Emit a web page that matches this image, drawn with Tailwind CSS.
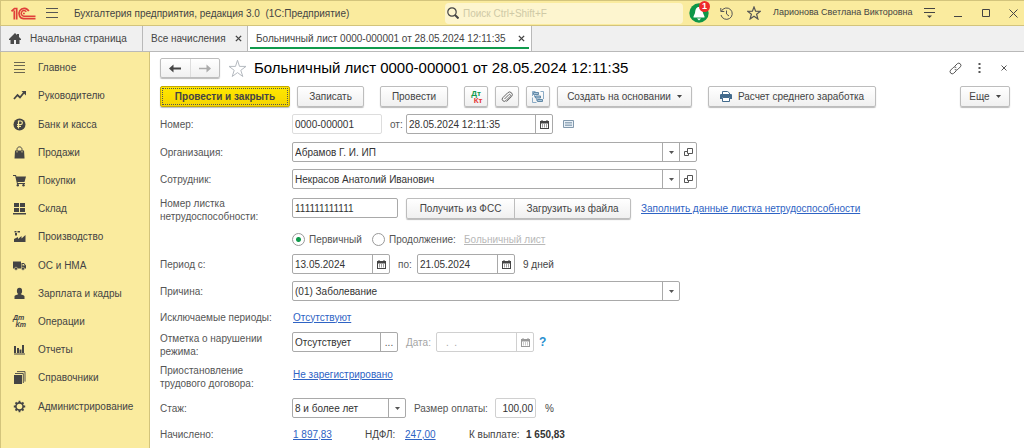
<!DOCTYPE html>
<html lang="ru">
<head>
<meta charset="utf-8">
<meta name="viewport" content="width=device-width, initial-scale=1">
<title>Больничный лист — Бухгалтерия предприятия</title>
<script src="https://cdn.jsdelivr.net/npm/@tailwindcss/browser@4"></script>
</head>
<body class="flex min-h-screen flex-col bg-white font-['Liberation_Sans',Arial,sans-serif] text-[10px] text-[#444]">

<svg class="hidden" aria-hidden="true">
  <symbol id="cal" viewBox="0 0 9 9"><path fill="currentColor" fill-rule="evenodd" d="M0 1h1.500V0h1v1h4V0h1v1H9v8H0zM1 3.500V8h7V3.500zM2 4.500h1v1H2zM4 4.500h1v1H4zM6 4.500h1v1H6zM2 6.500h1v.7H2zM4 6.500h1v.7H4zM6 6.500h1v.7H6z"/></symbol>
  <symbol id="down" viewBox="0 0 5 3"><path fill="currentColor" d="M0 0h5L2.500 3z"/></symbol>
  <symbol id="open" viewBox="0 0 9 9"><path fill="none" stroke="currentColor" d="M3.500.5h5v5h-5zM3.500 3.500h-3v4h4v-2"/></symbol>
  <symbol id="cross" viewBox="0 0 8 8"><path fill="none" stroke="currentColor" stroke-width="1.600" d="M1 1l6 6M7 1L1 7"/></symbol>
</svg>

<header class="flex h-[26px] shrink-0 items-center border-y border-l border-[#d3c47c] bg-[#faeb9e]">
  <svg class="ml-[10px] h-[13px] w-[25px] shrink-0" viewBox="0 0 25 13" fill="none" stroke="#e0403a" role="img" aria-label="1С">
    <path stroke-width="1.700" d="M.5 4.300L3.500 1.500h2.200V12.500M3.300 3.500v9"/>
    <path stroke-width="1.700" d="M17.800 4.200A5.200 5.200 0 1 0 12.800 11.700H24.500"/>
    <path stroke-width="1.500" d="M15.300 4.800A2.800 2.800 0 1 0 12.800 9.200H24.500"/>
    <path stroke-width="1.300" d="M13.800 6.500h-1.800"/>
  </svg>
  <button class="ml-[10px] flex h-4 w-3 shrink-0 items-center" aria-label="Главное меню"><svg class="h-[10px] w-3" viewBox="0 0 12 10" stroke="#555"><path d="M0 .5h12M0 4.500h12M0 9.500h12"/></svg></button>
  <span class="ml-4 w-[371px] whitespace-nowrap">Бухгалтерия предприятия, редакция 3.0&nbsp; (1С:Предприятие)</span>
  <label class="flex h-[21px] min-w-0 flex-1 items-center rounded-sm bg-[#fdf5cf] pl-[2px]">
    <svg class="size-3 shrink-0" viewBox="0 0 12 12" fill="none" stroke="#444" stroke-width="1.200"><circle cx="5" cy="5" r="4.200"/><path stroke-width="2" d="M8 8l3.500 3.500"/></svg>
    <input class="ml-1 min-w-0 flex-1 bg-transparent outline-none placeholder:text-[#cfc9a6]" placeholder="Поиск Ctrl+Shift+F" aria-label="Поиск">
  </label>
  <button class="relative ml-[6px] size-5 shrink-0" aria-label="Уведомления">
    <svg class="size-5" viewBox="0 0 20 20"><circle cx="10" cy="10" r="9.700" fill="#0e9648"/><path fill="#fff" d="M10 4c3 0 3.500 2.500 4 6l1.500 3.500v1h-11v-1L6 10c.5-3.500 1-6 4-6zM8 15.500h4l-2 2z"/></svg>
    <span class="absolute -top-[2px] left-[10px] flex size-[11px] items-center justify-center rounded-full bg-[#ee2a2a] text-[9px] font-bold text-white">1</span>
  </button>
  <button class="ml-[11px] size-[13px] shrink-0" aria-label="История"><svg viewBox="0 0 13 13" fill="none" stroke="#555"><path d="M1.500 4A5.700 5.700 0 1 1 1 8M.8 1v3.500h3.500M6.500 3.500v3.500L9 9"/></svg></button>
  <button class="ml-[14px] size-[14px] shrink-0" aria-label="Избранное"><svg viewBox="0 0 14 14" fill="none" stroke="#555" stroke-width="1.200"><path d="M7 1l1.600 4.200 4.600.2-3.600 2.800L10.900 13 7 10.300 3.100 13l1.300-4.800L.8 5.400l4.600-.2z"/></svg></button>
  <span class="ml-3 w-[140px] text-[9px] whitespace-nowrap">Ларионова Светлана Викторовна</span>
  <button class="ml-[11px] h-3 w-[11px] shrink-0" aria-label="Настройки"><svg viewBox="0 0 11 12" fill="none" stroke="#444"><path d="M0 1.500h11M0 5.500h11"/><path fill="#444" stroke="none" d="M3 8.500h5L5.500 11z"/></svg></button>
  <button class="ml-[19px] size-2 shrink-0" aria-label="Свернуть"><svg viewBox="0 0 8 8" stroke="#444"><path d="M0 7.500h8"/></svg></button>
  <button class="ml-5 size-2 shrink-0" aria-label="Развернуть"><svg viewBox="0 0 8 8" fill="none" stroke="#444"><path d="M.5.5h7v7h-7z"/></svg></button>
  <button class="mr-[6px] ml-[19px] size-[9px] shrink-0" aria-label="Закрыть"><svg viewBox="0 0 9 9" stroke="#444"><path d="M.5.5l8 8M8.500.5l-8 8"/></svg></button>
</header>

<nav class="flex h-[26px] shrink-0 border-b border-l border-[#b9b9b9] bg-[#f0f0f0]" aria-label="Открытые окна">
  <a href="#" class="flex w-[142px] items-center border-r border-[#b9b9b9] pl-2 whitespace-nowrap"><svg class="h-[11px] w-3 shrink-0" viewBox="0 0 12 11" fill="#4a4a4a"><path d="M6 0l2 2V1h2v3l2 2v1h-1.500v4H7V7H5v4H1.500V7H0V6z"/></svg><span class="ml-[9px]">Начальная страница</span></a>
  <div class="flex w-[105px] items-center justify-between border-r border-[#b9b9b9] pr-[5px] pl-2"><a href="#" class="whitespace-nowrap">Все начисления</a><button class="shrink-0" aria-label="Закрыть вкладку"><svg class="size-[7px]"><use href="#cross"/></svg></button></div>
  <div class="flex w-[284px] items-stretch border-r border-[#b9b9b9] bg-white px-[2px] pb-[2px]"><div class="flex flex-1 items-center justify-between border-b-2 border-[#109a4c] pt-[3px] pr-1 pl-[6px]"><a href="#" class="whitespace-nowrap">Больничный лист 0000-000001 от 28.05.2024 12:11:35</a><button class="shrink-0" aria-label="Закрыть вкладку"><svg class="size-[7px]"><use href="#cross"/></svg></button></div></div>
</nav>

<div class="flex flex-1">
  <aside class="w-[150px] shrink-0 border-x border-[#d3c47c] bg-[#faeb9e]">
    <nav class="flex flex-col pt-px whitespace-nowrap text-[#444]" aria-label="Разделы">
      <a href="#" class="flex h-7 items-center gap-3 pl-3"><svg class="size-[13px] shrink-0" viewBox="0 0 13 13" stroke="#6b6650"><path d="M1 1.500h11M1 4.500h11M1 8.500h11M1 11.500h11"/></svg>Главное</a>
      <a href="#" class="flex h-[29px] items-center gap-3 pl-3"><svg class="size-[13px] shrink-0" viewBox="0 0 13 13"><path fill="none" stroke="currentColor" stroke-width="1.800" d="M1 10l3.500-4L7 8.500l4-5"/><path fill="currentColor" d="M8.500 2H13v4.500z"/></svg>Руководителю</a>
      <a href="#" class="flex h-7 items-center gap-3 pl-3"><svg class="size-[13px] shrink-0" viewBox="0 0 13 13"><circle cx="6.500" cy="6.500" r="6" fill="currentColor"/><path fill="none" stroke="#faeb9e" stroke-width="1.200" d="M5.500 10.500V3h2a1.800 1.800 0 0 1 0 3.700H4M4 8.500h4"/></svg>Банк и касса</a>
      <a href="#" class="flex h-7 items-center gap-3 pl-3"><svg class="size-[13px] shrink-0" viewBox="0 0 13 13"><path fill="currentColor" d="M2 4.500h9l.5 8h-10z"/><path fill="none" stroke="currentColor" d="M4 6V3.500C4 0 9 0 9 3.500V6"/><path fill="none" stroke="#faeb9e" stroke-width=".8" d="M4 5v1.500M9 5v1.500"/></svg>Продажи</a>
      <a href="#" class="flex h-7 items-center gap-3 pl-3"><svg class="size-[13px] shrink-0" viewBox="0 0 13 13" fill="currentColor"><path d="M0 1h3l.4 1.500H13L11.500 8h-7l.3 1H12v1H4L2.200 2H0z"/><circle cx="4.800" cy="11.300" r="1.200"/><circle cx="10.500" cy="11.300" r="1.200"/></svg>Покупки</a>
      <a href="#" class="flex h-7 items-center gap-3 pl-3"><svg class="size-[13px] shrink-0" viewBox="0 0 13 13" fill="currentColor"><path d="M1 1h5v4H1zM7 1h5v4H7zM1 6h5v4H1zM7 6h5v4H7zM0 11h13v1.500H0z"/></svg>Склад</a>
      <a href="#" class="flex h-[29px] items-center gap-3 pl-3"><svg class="size-[13px] shrink-0" viewBox="0 0 13 13" fill="currentColor"><path d="M1 12V9L5 7v2l3.500-3v2.500L12.500 5v7zM1.500 1h2v1.500h-2zM4.500 1H7v1.500H4.500zM2 3h2v2.500H2z"/></svg>Производство</a>
      <a href="#" class="flex h-7 items-center gap-3 pl-3"><svg class="size-[13px] shrink-0" viewBox="0 0 13 13"><path fill="currentColor" d="M0 2.500h8v7H0zM8.500 4h2.500l2 2.500v3H8.500z"/><path fill="#faeb9e" d="M9.500 5h1.300l1 1.500H9.500z"/><circle cx="3" cy="9.700" r="1.500" fill="currentColor" stroke="#faeb9e" stroke-width=".5"/><circle cx="10" cy="9.700" r="1.500" fill="currentColor" stroke="#faeb9e" stroke-width=".5"/></svg>ОС и НМА</a>
      <a href="#" class="flex h-7 items-center gap-3 pl-3"><svg class="size-[13px] shrink-0" viewBox="0 0 13 13" fill="currentColor"><ellipse cx="6.500" cy="4" rx="2.600" ry="3.300"/><path d="M1.500 12V9.500C1.500 8 5 8 5.300 7h2.400C8 8 11.500 8 11.500 9.500V12z"/></svg>Зарплата и кадры</a>
      <a href="#" class="flex h-7 items-center gap-3 pl-3"><span class="flex w-[13px] flex-col text-[7px]/[7px] font-bold italic" aria-hidden="true"><span>Дт</span><span class="self-end">Кт</span></span>Операции</a>
      <a href="#" class="flex h-7 items-center gap-3 pl-3"><svg class="size-[13px] shrink-0" viewBox="0 0 13 13" fill="currentColor"><path d="M1 3h2v7H1zM4 5h2v5H4zM6.500 6.500h2V10h-2zM9 2h2v8H9zM1 10.500h11v1H1z"/></svg>Отчеты</a>
      <a href="#" class="flex h-[29px] items-center gap-3 pl-3"><svg class="size-[13px] shrink-0" viewBox="0 0 13 13"><path fill="currentColor" d="M1 4h8v9H1z"/><path fill="none" stroke="currentColor" stroke-width=".9" d="M2 2.500h8.300V12M4 .6h8v10"/></svg>Справочники</a>
      <a href="#" class="flex h-7 items-center gap-3 pl-3"><svg class="size-[13px] shrink-0" viewBox="0 0 13 13" fill="none" stroke="currentColor"><circle cx="6.500" cy="6.500" r="3.600" stroke-width="1.600"/><path stroke-width="1.800" d="M6.500.8v2.200M6.500 10v2.200M.8 6.500H3M10 6.500h2.200M2.500 2.500L4 4M9 9l1.500 1.500M10.500 2.500L9 4M4 9l-1.500 1.500"/></svg>Администрирование</a>
    </nav>
  </aside>

  <main class="min-w-0 flex-1 pl-[10px]">
    <div class="flex h-8 items-center">
      <div class="flex h-5 w-[60px] rounded-[2px] border border-[#bdbdbd] bg-linear-to-b from-white to-[#f0f0f0] shadow-[0_1px_1px_#bbb]">
        <button class="flex flex-1 items-center justify-center border-r border-[#ddd]" aria-label="Назад"><svg class="h-[9px] w-3" viewBox="0 0 12 9"><path fill="#444" d="M0 4.500L4.500.5v3H12v2H4.500v3z"/></svg></button>
        <button class="flex flex-1 items-center justify-center" aria-label="Вперед"><svg class="h-[9px] w-3" viewBox="0 0 12 9"><path fill="#aaa" d="M12 4.500L7.500.5v3.200H0v1.600h7.500v3.200z"/></svg></button>
      </div>
      <button class="ml-2 size-[19px]" aria-label="В избранное"><svg viewBox="0 0 19 19" fill="none" stroke="#b5bac0"><path d="M9.500 1.200l2 6.200H18l-5.200 3.900 2 6.200-5.300-3.900-5.300 3.900 2-6.200L1 7.400h6.500z"/></svg></button>
      <h1 class="ml-[7px] text-[15px] whitespace-nowrap text-black">Больничный лист 0000-000001 от 28.05.2024 12:11:35</h1>
      <button class="ml-auto size-[13px]" aria-label="Ссылка"><svg viewBox="0 0 13 13" fill="none" stroke="#555"><path d="M5.500 4.500L8.300 1.700a2.200 2.200 0 0 1 3.100 3.100L8.800 7.400a2.200 2.200 0 0 1-3.100 0M7.500 8.500l-2.800 2.800a2.200 2.200 0 0 1-3.100-3.100l2.600-2.600a2.200 2.200 0 0 1 3.100 0"/></svg></button>
      <button class="ml-4 h-[10px] w-[3px]" aria-label="Меню"><svg viewBox="0 0 3 10" fill="#555"><path d="M.5 0h2v2h-2zM.5 4h2v2h-2zM.5 8h2v2h-2z"/></svg></button>
      <button class="mr-[17px] ml-5 size-[6px]" aria-label="Закрыть документ"><svg viewBox="0 0 6 6" stroke="#555"><path d="M.5.5l5 5M5.500.5l-5 5"/></svg></button>
    </div>

    <div class="mt-[2px] flex h-[21px] whitespace-nowrap">
      <button class="w-[130px] rounded-[2px] border border-[#c4a900] bg-linear-to-b from-[#ffe800] to-[#f5d400] p-px font-bold shadow-[0_1px_1px_#bbb]"><span class="flex h-full items-center justify-center border border-dotted border-[#555]">Провести и закрыть</span></button>
      <button class="ml-[7px] w-[67px] rounded-[2px] border border-[#bdbdbd] bg-linear-to-b from-white to-[#f0f0f0] shadow-[0_1px_1px_#bbb]">Записать</button>
      <button class="ml-4 w-[68px] rounded-[2px] border border-[#bdbdbd] bg-linear-to-b from-white to-[#f0f0f0] shadow-[0_1px_1px_#bbb]">Провести</button>
      <button class="ml-4 flex w-6 items-center justify-center rounded-[2px] border border-[#bdbdbd] bg-linear-to-b from-white to-[#f0f0f0] shadow-[0_1px_1px_#bbb]" aria-label="Проводки"><span class="flex w-[13px] flex-col text-[8px]/[7px] font-bold"><span class="text-[#109a4c]">Дт</span><span class="self-end text-[#e53935]">Кт</span></span></button>
      <button class="ml-[7px] flex w-6 items-center justify-center rounded-[2px] border border-[#bdbdbd] bg-linear-to-b from-white to-[#f0f0f0] shadow-[0_1px_1px_#bbb]" aria-label="Файлы"><svg class="size-3" viewBox="0 0 12 12" fill="none" stroke="#666"><path d="M3.500 8l4.300-4.300a1 1 0 0 1 1.500 1.500L4.800 9.700a2 2 0 0 1-3-3L6.700 1.800a2.600 2.600 0 0 1 3.800 3.800L5.500 10.600"/></svg></button>
      <button class="ml-[7px] flex w-6 items-center justify-center rounded-[2px] border border-[#bdbdbd] bg-linear-to-b from-white to-[#f0f0f0] shadow-[0_1px_1px_#bbb]" aria-label="Структура подчиненности"><svg class="size-3" viewBox="0 0 12 12"><path fill="#a9c4da" stroke="#55809f" stroke-width=".9" d="M1.500 1.500h5v2h-5zM3.500 5h5v2h-5zM5.500 8.500h5v2h-5z"/><path fill="none" stroke="#7fa3c0" stroke-width=".9" d="M.5 5V.5h3M8.500.5h3V8M.5 6.500v5h4M2.500 3.500V6h1M4.500 7v2.500h1"/></svg></button>
      <button class="ml-[7px] flex w-[135px] items-center justify-center gap-[6px] rounded-[2px] border border-[#bdbdbd] bg-linear-to-b from-white to-[#f0f0f0] shadow-[0_1px_1px_#bbb]">Создать на основании<svg class="h-[3px] w-[5px] shrink-0"><use href="#down"/></svg></button>
      <button class="ml-4 flex w-[168px] items-center justify-center gap-[6px] rounded-[2px] border border-[#bdbdbd] bg-linear-to-b from-white to-[#f0f0f0] shadow-[0_1px_1px_#bbb]"><svg class="h-[11px] w-3 shrink-0" viewBox="0 0 12 11"><path fill="#426a8c" d="M1 3h10q1 0 1 1v4h-2V6H2v2H0V4q0-1 1-1z"/><path fill="#fff" stroke="#426a8c" d="M2.500 3V.5h5l2 1.500v1M2.500 6.500h7v4h-7z"/></svg>Расчет среднего заработка</button>
      <button class="mr-[14px] ml-auto flex w-[50px] items-center justify-center gap-[6px] rounded-[2px] border border-[#bdbdbd] bg-linear-to-b from-white to-[#f0f0f0] shadow-[0_1px_1px_#bbb]">Еще<svg class="h-[3px] w-[5px] shrink-0"><use href="#down"/></svg></button>
    </div>

    <form class="pt-[7px] pb-1 text-[10px]/[13px] whitespace-nowrap text-[#555]">
      <div class="flex h-5 items-center">
        <label for="num" class="w-[132px]">Номер:</label>
        <input id="num" readonly value="0000-000001" class="h-5 w-[90px] rounded-[2px] border border-[#ddd] px-[2px] text-[#333]">
        <label for="dt" class="ml-2 w-4">от:</label>
        <div class="flex h-5 w-[147px] rounded-[2px] border border-[#a9a9a9]"><input id="dt" value="28.05.2024 12:11:35" class="min-w-0 flex-1 px-[2px] text-[#333] outline-none"><button type="button" class="flex w-[17px] items-center justify-center border-l border-[#a9a9a9] text-[#444]" aria-label="Календарь"><svg class="size-[9px]"><use href="#cal"/></svg></button></div>
        <button type="button" class="ml-[10px] h-2 w-[11px]" aria-label="Комментарий"><svg viewBox="0 0 11 8" fill="#eaf1f7" stroke="#8299ad"><path d="M.5.5h10v7H.5z"/><path stroke-width=".8" d="M2 2.500h7M2 4h7M2 5.500h7"/></svg></button>
      </div>
      <div class="mt-2 flex h-5 items-center">
        <label for="org" class="w-[132px]">Организация:</label>
        <div class="relative flex h-5 w-[405px] rounded-[2px] border border-[#a9a9a9]"><select id="org" class="min-w-0 flex-1 appearance-none px-[2px] text-[#333] outline-none"><option>Абрамов Г. И. ИП</option></select><span class="pointer-events-none absolute inset-y-0 right-[17px] flex w-[17px] items-center justify-center border-l border-[#a9a9a9]"><svg class="h-[3px] w-[5px]"><use href="#down"/></svg></span><button type="button" class="flex w-[17px] items-center justify-center border-l border-[#a9a9a9] text-[#555]" aria-label="Открыть организацию"><svg class="size-[9px]"><use href="#open"/></svg></button></div>
      </div>
      <div class="mt-[7px] flex h-5 items-center">
        <label for="emp" class="w-[132px]">Сотрудник:</label>
        <div class="relative flex h-5 w-[405px] rounded-[2px] border border-[#a9a9a9]"><select id="emp" class="min-w-0 flex-1 appearance-none px-[2px] text-[#333] outline-none"><option>Некрасов Анатолий Иванович</option></select><span class="pointer-events-none absolute inset-y-0 right-[17px] flex w-[17px] items-center justify-center border-l border-[#a9a9a9]"><svg class="h-[3px] w-[5px]"><use href="#down"/></svg></span><button type="button" class="flex w-[17px] items-center justify-center border-l border-[#a9a9a9] text-[#555]" aria-label="Открыть сотрудника"><svg class="size-[9px]"><use href="#open"/></svg></button></div>
      </div>
      <div class="mt-[5px] flex h-7 items-center">
        <label for="sheet" class="w-[132px] pt-1">Номер листка<br>нетрудоспособности:</label>
        <input id="sheet" value="111111111111" class="h-5 w-[106px] rounded-[2px] border border-[#a9a9a9] px-[2px] text-[#333]">
        <div class="ml-2 flex h-[21px] rounded-[2px] border border-[#bdbdbd] bg-linear-to-b from-white to-[#f0f0f0] text-[#444] shadow-[0_1px_1px_#bbb]"><button type="button" class="w-[108px] border-r border-[#bdbdbd]">Получить из ФСС</button><button type="button" class="w-[115px]">Загрузить из файла</button></div>
        <a href="#" class="ml-[10px] text-[#2e63c4] underline">Заполнить данные листка нетрудоспособности</a>
      </div>
      <fieldset class="mt-[7px] ml-[132px] flex h-5 items-center">
        <input id="r1" type="radio" name="kind" checked class="size-[13px] appearance-none rounded-full border border-[#999] checked:bg-[radial-gradient(circle,#109a4c_2px,white_3px)]"><label for="r1" class="ml-1 w-[54px]">Первичный</label>
        <input id="r2" type="radio" name="kind" class="ml-[9px] size-[13px] appearance-none rounded-full border border-[#999] checked:bg-[radial-gradient(circle,#109a4c_2px,white_3px)]"><label for="r2" class="ml-1 w-[69px]">Продолжение:</label>
        <a href="#" class="ml-[6px] text-[#b8b8b8] underline">Больничный лист</a>
      </fieldset>
      <div class="mt-[5px] flex h-5 items-center">
        <label for="from" class="w-[132px]">Период с:</label>
        <div class="flex h-5 w-[98px] rounded-[2px] border border-[#a9a9a9]"><input id="from" value="13.05.2024" class="min-w-0 flex-1 px-[2px] text-[#333] outline-none"><button type="button" class="flex w-[17px] items-center justify-center border-l border-[#a9a9a9] text-[#444]" aria-label="Календарь"><svg class="size-[9px]"><use href="#cal"/></svg></button></div>
        <label for="to" class="ml-2 w-[19px]">по:</label>
        <div class="flex h-5 w-[98px] rounded-[2px] border border-[#a9a9a9]"><input id="to" value="21.05.2024" class="min-w-0 flex-1 px-[2px] text-[#333] outline-none"><button type="button" class="flex w-[17px] items-center justify-center border-l border-[#a9a9a9] text-[#444]" aria-label="Календарь"><svg class="size-[9px]"><use href="#cal"/></svg></button></div>
        <span class="ml-2 text-[#444]">9 дней</span>
      </div>
      <div class="mt-[7px] flex h-5 items-center">
        <label for="why" class="w-[132px]">Причина:</label>
        <div class="relative flex h-5 w-[388px] rounded-[2px] border border-[#a9a9a9]"><select id="why" class="min-w-0 flex-1 appearance-none px-[2px] text-[#333] outline-none"><option>(01) Заболевание</option></select><span class="pointer-events-none absolute inset-y-0 right-0 flex w-[17px] items-center justify-center border-l border-[#a9a9a9]"><svg class="h-[3px] w-[5px]"><use href="#down"/></svg></span></div>
      </div>
      <div class="mt-[6px] flex h-5 items-center">
        <span class="w-[133px]">Исключаемые периоды:</span><a href="#" class="text-[#2e63c4] underline">Отсутствуют</a>
      </div>
      <div class="mt-[2px] flex h-[26px] items-center">
        <label for="mark" class="w-[132px] pt-[6px]">Отметка о нарушении<br>режима:</label>
        <div class="flex h-5 w-[106px] rounded-[2px] border border-[#a9a9a9]"><input id="mark" value="Отсутствует" class="min-w-0 flex-1 px-[2px] text-[#333] outline-none"><button type="button" class="w-[17px] border-l border-[#a9a9a9]" aria-label="Выбрать отметку">...</button></div>
        <label for="md" class="ml-2 w-[30px] text-[#a5a5a5]">Дата:</label>
        <div class="flex h-5 w-[98px] rounded-[2px] border border-[#d0d0d0]"><input id="md" disabled value=".  ." class="min-w-0 flex-1 pl-[9px] whitespace-pre text-[#a5a5a5]"><button type="button" disabled class="flex w-[17px] items-center justify-center border-l border-[#d0d0d0] text-[#999]" aria-label="Календарь"><svg class="size-[9px]"><use href="#cal"/></svg></button></div>
        <button type="button" class="ml-[5px] text-xs font-bold text-[#2a8fd0]">?</button>
      </div>
      <div class="mt-[6px] flex h-[26px] items-center">
        <span class="w-[133px] pt-[5px]">Приостановление<br>трудового договора:</span><a href="#" class="text-[#2e63c4] underline">Не зарегистрировано</a>
      </div>
      <div class="mt-[11px] flex h-5 items-center">
        <label for="exp" class="w-[132px]">Стаж:</label>
        <div class="relative flex h-5 w-[114px] rounded-[2px] border border-[#a9a9a9]"><select id="exp" class="min-w-0 flex-1 appearance-none px-[2px] text-[#333] outline-none"><option>8 и более лет</option></select><span class="pointer-events-none absolute inset-y-0 right-0 flex w-[17px] items-center justify-center border-l border-[#a9a9a9]"><svg class="h-[3px] w-[5px]"><use href="#down"/></svg></span></div>
        <label for="pct" class="ml-2 w-[81px]">Размер оплаты:</label>
        <input id="pct" readonly value="100,00" class="h-5 w-[41px] rounded-[2px] border border-[#d0d0d0] px-[2px] text-right text-[#333]">
        <span class="ml-[9px] text-[#444]">%</span>
      </div>
      <div class="mt-[6px] flex h-5 items-center text-[#444]">
        <span class="w-[133px] text-[#555]">Начислено:</span><a href="#" class="w-[72px] text-[#2e63c4] underline">1 897,83</a>
        <span class="w-10">НДФЛ:</span><a href="#" class="w-16 text-[#2e63c4] underline">247,00</a>
        <span class="w-[57px]">К выплате:</span><b class="text-[#333]">1 650,83</b>
      </div>
    </form>
  </main>
</div>
</body>
</html>
